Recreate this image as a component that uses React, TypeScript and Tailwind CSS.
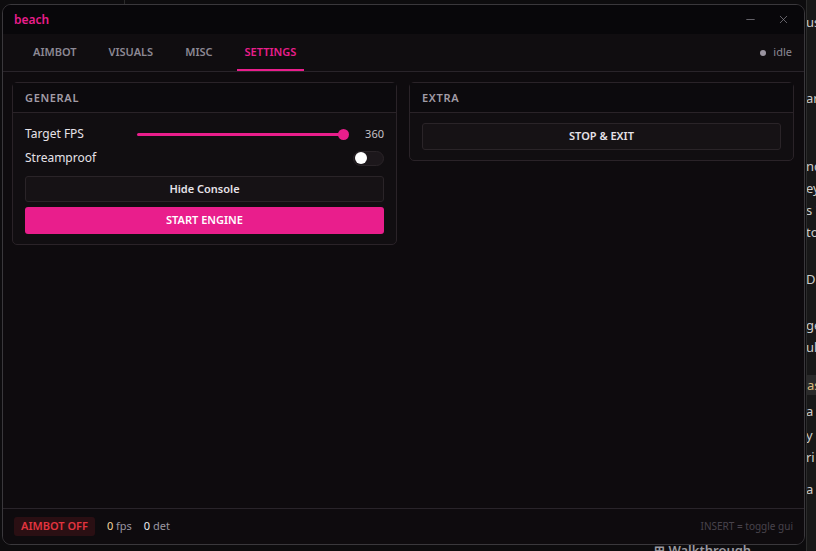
import { Minus, X } from 'lucide-react';

const tabs = ['AIMBOT', 'VISUALS', 'MISC', 'SETTINGS'];

const bgLines = [
  { t: 'us', top: 13 },
  { t: 'ary', top: 89 },
  { t: 'nd', top: 157 },
  { t: 'ey', top: 179 },
  { t: "s '", top: 201 },
  { t: 'to', top: 223 },
  { t: 'D', top: 270 },
  { t: 'ge', top: 316 },
  { t: 'uls', top: 338 },
  { t: 'a', top: 402 },
  { t: 'y', top: 426 },
  { t: 'ri', top: 448 },
  { t: 'a', top: 480 },
];

function Card({ title, children }: { title: string; children: React.ReactNode }) {
  return (
    <div className="rounded-[5px] border border-[#2a2328] bg-[#110e11]">
      <div className="h-[30px] flex items-center px-3 border-b border-[#2a2328] bg-[#0c0a0d]">
        <span className="text-[11px] font-semibold tracking-[0.06em] text-[#a29ca6] pt-[2px]">{title}</span>
      </div>
      <div className="px-3 pt-[10px] pb-[10px] flex flex-col">{children}</div>
    </div>
  );
}

export default function App() {
  return (
    <div
      className="relative w-[816px] h-[551px] overflow-hidden bg-[#0d0c0e]"
      style={{ fontFamily: '"Segoe UI", "Noto Sans", "Open Sans", sans-serif' }}
    >
      {/* app behind the window */}
      <div className="absolute left-[124px] top-0 w-px h-[4px] bg-[#2a2a2a]" />
      <div className="absolute left-[806px] top-0 w-px h-[551px] bg-[#2c2c2c]" />
      <div className="absolute left-[807px] top-0 w-[9px] h-[551px] bg-[#181818] overflow-hidden">
        {bgLines.map((l, i) => (
          <div key={i} className="absolute left-[-1px] text-[13px] text-[#cccccc] whitespace-nowrap" style={{ top: l.top }}>
            {l.t}
          </div>
        ))}
        <div className="absolute left-0 top-[375px] w-[9px] h-[20px] bg-[#2a2a2a] text-[13px] text-[#d7ba7d] leading-[20px] whitespace-nowrap">as</div>
      </div>
      <div className="absolute left-[654px] top-[541px] text-[13px] font-semibold text-[#9a9aa0] whitespace-nowrap">
        ⊞ Walkthrough
      </div>

      {/* window */}
      <div className="absolute left-[2px] top-[4px] w-[803px] h-[541px] rounded-[9px] border border-[#3a383c] bg-[#0e0b0e] overflow-hidden flex flex-col">
        <div className="h-[29px] shrink-0 flex items-center justify-between bg-[#08070a] pl-[11px] pr-[14px]">
          <span className="text-[12px] font-semibold text-[#e91e8c]">beach</span>
          <div className="flex items-center gap-[20px] text-[#8a8790]">
            <Minus size={13} strokeWidth={1.3} />
            <X size={13} strokeWidth={1.3} />
          </div>
        </div>

        <div className="h-[38px] shrink-0 flex items-stretch justify-between bg-[#100d10] border-b border-[#29242a] pl-[14px] pr-[12px]">
          <div className="flex items-stretch">
            {tabs.map((t) => (
              <div
                key={t}
                className={
                  t === 'SETTINGS'
                    ? 'px-[8px] mx-[8px] flex items-center text-[11px] font-semibold text-[#e91e8c] border-b-2 border-[#e91e8c] pt-[2px]'
                    : 'px-[8px] mx-[8px] flex items-center text-[11px] font-semibold text-[#8c8894] border-b-2 border-transparent pt-[2px]'
                }
              >
                {t}
              </div>
            ))}
          </div>
          <div className="flex items-center gap-[7px] text-[11px] text-[#8c8894]">
            <span className="w-[6px] h-[6px] rounded-full bg-[#9a94a0]" />
            idle
          </div>
        </div>

        <div className="flex-1 grid grid-cols-2 gap-3 pl-[9px] pr-[10px] pt-[10px] items-start">
          <Card title="GENERAL">
            <div className="h-[22px] flex items-center">
              <span className="w-[112px] text-[12px] text-[#e6e2e8]">Target FPS</span>
              <div className="relative flex-1 h-[3px] rounded-full bg-[#e91e8c] mr-[18px]">
                <span className="absolute right-[-5px] top-[-4px] w-[11px] h-[11px] rounded-full bg-[#e91e8c]" />
              </div>
              <span className="w-[22px] text-right text-[11px] text-[#c6c2c8]">360</span>
            </div>
            <div className="h-[26px] flex items-center justify-between">
              <span className="text-[12px] text-[#e6e2e8]">Streamproof</span>
              <span className="w-[31px] h-[15px] rounded-full bg-[#1c171b] border border-[#2a2428] flex items-center pl-[1px]">
                <span className="w-[12px] h-[12px] rounded-full bg-white" />
              </span>
            </div>
            <button className="mt-[5px] h-[26px] rounded-[3px] border border-[#2a2428] bg-[#161215] text-[11px] font-semibold text-[#e6e2e8]">
              Hide Console
            </button>
            <button className="mt-[5px] h-[27px] rounded-[3px] bg-[#e91e8c] text-[11px] font-semibold text-white">
              START ENGINE
            </button>
          </Card>
          <Card title="EXTRA">
            <button className="h-[27px] rounded-[3px] border border-[#2a2428] bg-[#161215] text-[11px] font-semibold text-[#e6e2e8]">
              STOP &amp; EXIT
            </button>
          </Card>
        </div>

        <div className="h-[36px] shrink-0 flex items-center justify-between border-t border-[#29242a] bg-[#0e0b0e] pl-[11px] pr-[11px]">
          <div className="flex items-center">
            <span className="h-[19px] px-[7px] flex items-center rounded-[3px] bg-[#2a0f13] text-[11px] font-semibold text-[#e2343f]">
              AIMBOT OFF
            </span>
            <span className="ml-[12px] text-[11px] text-[#9a96a0]">
              <span className="text-[#f2d9a0]">0</span> fps
            </span>
            <span className="ml-[12px] text-[11px] text-[#9a96a0]">
              <span className="text-[#ecebf0]">0</span> det
            </span>
          </div>
          <span className="text-[10px] text-[#48434c]">INSERT = toggle gui</span>
        </div>
      </div>
    </div>
  );
}
